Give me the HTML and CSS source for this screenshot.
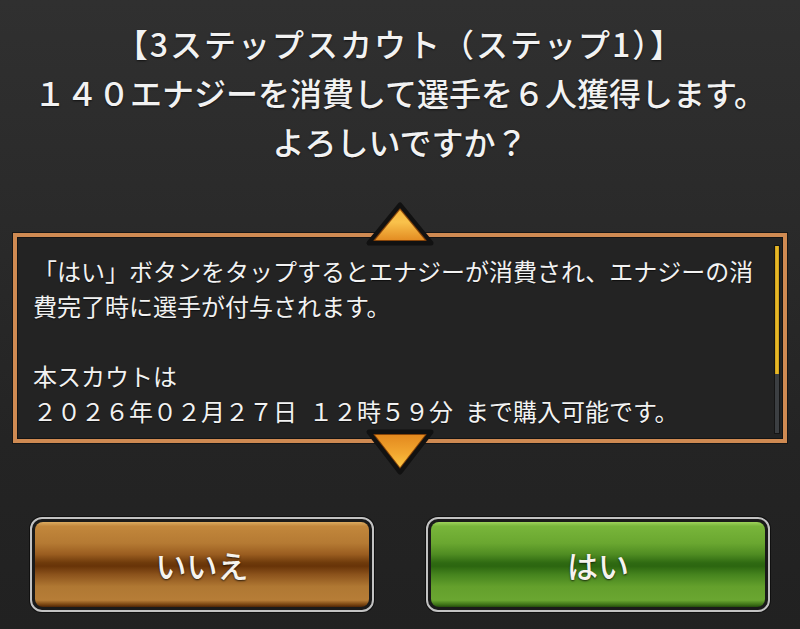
FILE: index.html
```html
<!DOCTYPE html>
<html lang="ja">
<head>
<meta charset="utf-8">
<title>3ステップスカウト</title>
<link rel="stylesheet" href="styles.css">
</head>
<body>
<div class="screen">
  <div class="title">
    <p class="title-head">【3ステップスカウト（ステップ1）】</p>
    <p>１４０エナジーを消費して選手を６人獲得します。</p>
    <p>よろしいですか？</p>
  </div>
  <div class="box">
    <svg class="arrow arrow-up" width="76" height="50" viewBox="0 0 76 50">
      <defs>
        <linearGradient id="gu" x1="0" y1="0" x2="0" y2="1">
          <stop offset="0" stop-color="#f6b43a"/>
          <stop offset="0.45" stop-color="#f9c24c"/>
          <stop offset="1" stop-color="#e0841c"/>
        </linearGradient>
      </defs>
      <polygon points="38,6 7,44 69,44" fill="url(#gu)" stroke="#111" stroke-width="5" stroke-linejoin="round"/>
      <polygon points="38,10 12,41.5 64,41.5" fill="none" stroke="#8a4206" stroke-width="1.2" stroke-linejoin="round" opacity="0.8"/>
    </svg>
    <div class="box-text">
      <p>「はい」ボタンをタップするとエナジーが消費され、エナジーの消<br>費完了時に選手が付与されます。</p>
      <p class="blank">&nbsp;</p>
      <p>本スカウトは<br>２０２６年０２月２７日&ensp;１２時５９分&ensp;まで購入可能です。</p>
    </div>
    <div class="scrollbar"><div class="thumb"></div></div>
    <svg class="arrow arrow-down" width="76" height="52" viewBox="0 0 76 52">
      <defs>
        <linearGradient id="gd" x1="0" y1="0" x2="0" y2="1">
          <stop offset="0" stop-color="#e0841c"/>
          <stop offset="0.55" stop-color="#f3a830"/>
          <stop offset="1" stop-color="#ffd24e"/>
        </linearGradient>
      </defs>
      <polygon points="7,6 69,6 38,46" fill="url(#gd)" stroke="#111" stroke-width="5" stroke-linejoin="round"/>
      <polygon points="12,8.5 64,8.5 38,42" fill="none" stroke="#8a4206" stroke-width="1.2" stroke-linejoin="round" opacity="0.8"/>
    </svg>
  </div>
  <div class="buttons">
    <div class="btn btn-no"><div class="face">いいえ</div></div>
    <div class="btn btn-yes"><div class="face">はい</div></div>
  </div>
</div>
</body>
</html>
```

FILE: styles.css
```css
html, body {
  margin: 0;
  padding: 0;
}
body {
  width: 800px;
  height: 629px;
  overflow: hidden;
  background: linear-gradient(to bottom, #303030 0%, #2a2a2a 35%, #242424 70%, #212121 100%);
  font-family: "Noto Sans CJK JP", "Noto Sans", sans-serif;
  color: #f2f2f2;
}
.screen {
  width: 800px;
  height: 629px;
  display: flex;
  flex-direction: column;
}
.title {
  padding-top: 19px;
  text-align: center;
  font-size: 32px;
  font-weight: 500;
  line-height: 49px;
  text-shadow: 0 1px 2px rgba(0, 0, 0, 0.6);
}
.title p {
  margin: 0;
  white-space: nowrap;
}
.title-head {
  letter-spacing: 2px;
}
.box {
  position: relative;
  margin: 67px 13px 0;
  height: 210px;
  box-sizing: border-box;
  border: 4px solid #cf8a52;
  background: #232323;
  box-shadow: 0 0 0 1px #161616, inset 0 0 0 1px #141414;
  display: flex;
}
.box-text {
  flex: 1;
  padding: 16px 0 0 16px;
  font-size: 24px;
  line-height: 35px;
  text-shadow: 0 1px 1px rgba(0, 0, 0, 0.6);
}
.box-text p {
  margin: 0;
  white-space: nowrap;
}
.scrollbar {
  width: 4px;
  margin: 8px 3px 5px 0;
  background: #3c3f42;
  border: 1px solid #151515;
  display: flex;
  flex-direction: column;
}
.thumb {
  height: 128px;
  background: linear-gradient(to right, #c99a18, #f0c22c, #c99a18);
}
.arrow {
  position: absolute;
  left: calc(50% - 38px);
}
.arrow-up {
  top: -38px;
}
.arrow-down {
  top: 189px;
}
.buttons {
  display: flex;
  gap: 52px;
  padding: 0 30px;
  margin-top: 74px;
}
.btn {
  width: 344px;
  height: 95px;
  box-sizing: border-box;
  border: 2px solid #c2c2c2;
  border-radius: 12px;
  padding: 3px;
  background: #1a1a1a;
  box-shadow: 0 0 0 1px #101010;
}
.face {
  height: 100%;
  border-radius: 8px;
  display: flex;
  align-items: center;
  justify-content: center;
  font-size: 31px;
  font-weight: 500;
  color: #f6f3ee;
  text-shadow: 0 1px 2px rgba(0, 0, 0, 0.7);
}
.btn-no .face {
  background: linear-gradient(to bottom,
    #dcab60 0%, #c2873c 5%, #b57a33 25%, #9a5d20 38%, #6e3a0b 48%,
    #683408 52%, #8c531c 62%, #b07833 76%, #b67d37 92%, #7a4612 97%, #4e2506 100%);
}
.btn-yes .face {
  background: linear-gradient(to bottom,
    #9ed25a 0%, #78b53a 5%, #6aa730 25%, #4f8c22 38%, #2f6a12 48%,
    #2c6610 52%, #46841e 62%, #64a02c 76%, #6aa631 92%, #3f7418 97%, #244c0c 100%);
}
```
